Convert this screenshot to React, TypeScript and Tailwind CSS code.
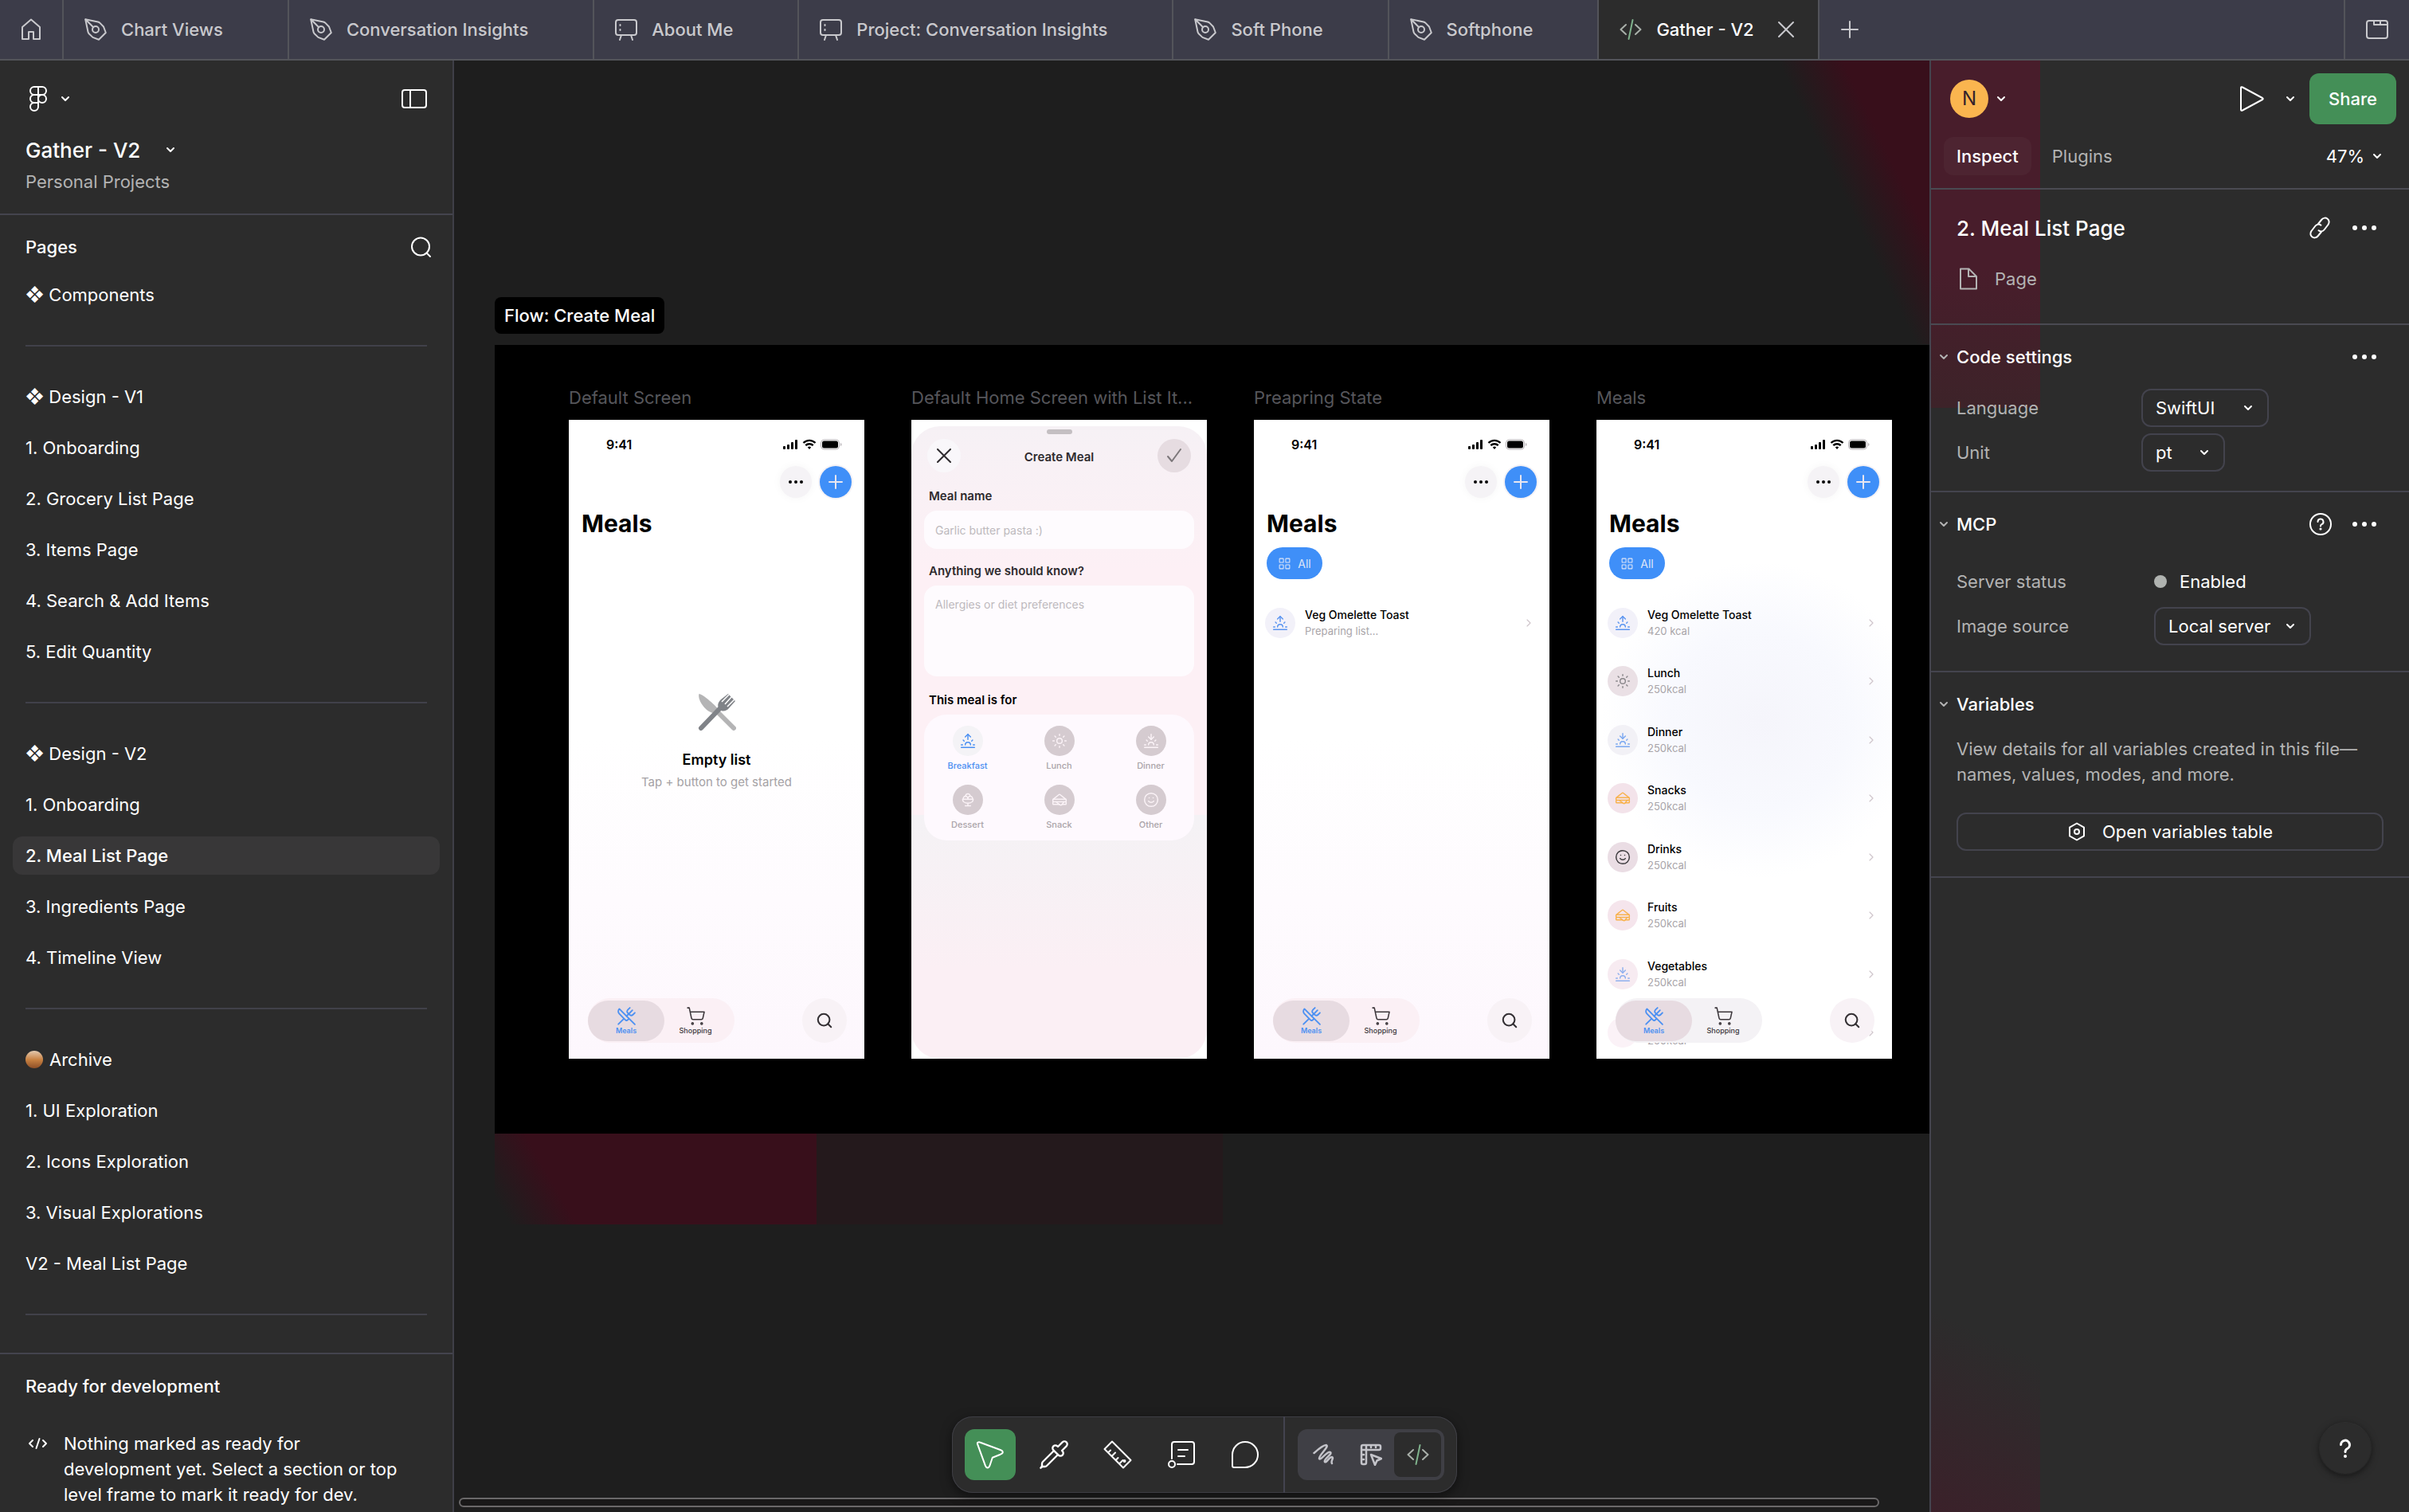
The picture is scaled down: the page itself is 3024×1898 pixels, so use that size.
import { useState, type ReactNode } from 'react';
import clsx from 'clsx';
import {
  ChevronRight,
  IceCreamBowl,
  LayoutGrid,
  Pipette,
  Sandwich,
  Search,
  ShoppingCart,
  Smile,
  Sun,
  Sunrise,
  Sunset,
  UtensilsCrossed,
} from 'lucide-react';

type TabKind = 'design' | 'board' | 'dev';

const TABS: { name: string; kind: TabKind }[] = [
  { name: 'Chart Views', kind: 'design' },
  { name: 'Conversation Insights', kind: 'design' },
  { name: 'About Me', kind: 'board' },
  { name: 'Project: Conversation Insights', kind: 'board' },
  { name: 'Soft Phone', kind: 'design' },
  { name: 'Softphone', kind: 'design' },
  { name: 'Gather - V2', kind: 'dev' },
];

const PAGE_GROUPS = [
  ['❖ Components'],
  ['❖ Design - V1', '1. Onboarding', '2. Grocery List Page', '3. Items Page', '4. Search & Add Items', '5. Edit Quantity'],
  ['❖ Design - V2', '1. Onboarding', '2. Meal List Page', '3. Ingredients Page', '4. Timeline View'],
  ['Archive', '1. UI Exploration', '2. Icons Exploration', '3. Visual Explorations', 'V2 - Meal List Page'],
];

// last row only peeks out from under the tab bar
const MEALS = [
  { name: 'Veg Omelette Toast', sub: '420 kcal', icon: Sunrise, tone: 'bg-[#f2f1f9] text-[#5b95f0]' },
  { name: 'Lunch', sub: '250kcal', icon: Sun, tone: 'bg-[#eae0e5] text-[#8b888c]' },
  { name: 'Dinner', sub: '250kcal', icon: Sunset, tone: 'bg-[#f2f1f6] text-[#7ba8f0]' },
  { name: 'Snacks', sub: '250kcal', icon: Sandwich, tone: 'bg-[#f3e3ea] text-[#f8b24e]' },
  { name: 'Drinks', sub: '250kcal', icon: Smile, tone: 'bg-[#eadde4] text-[#3c3a3d]' },
  { name: 'Fruits', sub: '250kcal', icon: Sandwich, tone: 'bg-[#f5e5ec] text-[#f8b24e]' },
  { name: 'Vegetables', sub: '250kcal', icon: Sunset, tone: 'bg-[#f7ebf1] text-[#8fb0ee]' },
  { name: '', sub: '250kcal', icon: Sunset, tone: 'bg-[#fbf2f7] text-[#fbf2f7]' },
];

const KINDS = [
  { name: 'Breakfast', icon: Sunrise },
  { name: 'Lunch', icon: Sun },
  { name: 'Dinner', icon: Sunset },
  { name: 'Dessert', icon: IceCreamBowl },
  { name: 'Snack', icon: Sandwich },
  { name: 'Other', icon: Smile },
];

/* ---------- icons ---------- */

function Icon({ size = 28, box = 28, sw = 2, className, children }: {
  size?: number; box?: number; sw?: number; className?: string; children: ReactNode;
}) {
  return (
    <svg
      width={size}
      height={size}
      viewBox={`0 0 ${box} ${box}`}
      fill="none"
      stroke="currentColor"
      strokeWidth={sw}
      strokeLinecap="round"
      strokeLinejoin="round"
      aria-hidden="true"
      className={clsx('shrink-0', className)}
    >
      {children}
    </svg>
  );
}

const Chevron = ({ className }: { className?: string }) => (
  <Icon size={12} box={12} className={className}><path d="M2 4l4 4 4-4" /></Icon>
);

const Dots = () => (
  <Icon size={32} box={32}>
    <g fill="currentColor" stroke="none">
      <circle cx="4" cy="16" r="3" /><circle cx="16" cy="16" r="3" /><circle cx="28" cy="16" r="3" />
    </g>
  </Icon>
);

const CodeIcon = ({ size = 28 }: { size?: number }) => (
  <Icon size={size} className="text-[#a9b0aa]">
    <path d="M8 8l-6.500 6L8 20M20 8l6.500 6L20 20" />
    <path d="M16.500 2l-5 24" stroke="#7fb28c" />
  </Icon>
);

function TabIcon({ kind }: { kind: TabKind }) {
  if (kind === 'dev') return <CodeIcon />;
  if (kind === 'board') {
    return (
      <Icon>
        <rect x="1" y="2" width="26" height="19" rx="3" />
        <path d="M8 21l-2 6M20 21l2 6M6.500 8v1M6.500 14v1" />
      </Icon>
    );
  }
  return (
    <Icon>
      <path d="M1.200 1.200L17 4.500c1 .2 1.800.7 2.500 1.400L24 10.500 26.800 18 18 26.800l-7.500-2.900-4.600-4.400c-.7-.7-1.200-1.500-1.400-2.500z" />
      <circle cx="14" cy="14" r="4" />
      <path d="M1.500 1.500l9.700 9.700" />
    </Icon>
  );
}

/* ---------- top bar ---------- */

function TabBar() {
  const [active, setActive] = useState('Gather - V2');
  return (
    <nav className="flex h-19 shrink-0 border-b-2 border-[#53545a] bg-[#3c3c49] text-[22px] font-medium text-[#c9c9cd]">
      <button type="button" aria-label="Home" className="flex w-20 items-center justify-center border-r-2 border-[#53545a]">
        <Icon><path d="M3 11L14 1.500 25 11v15h-8v-9h-6v9H3z" /></Icon>
      </button>
      {TABS.map(t => (
        <button
          key={t.name}
          type="button"
          onClick={() => setActive(t.name)}
          className={clsx(
            'flex items-center gap-4.5 border-r-2 border-[#53545a] pl-6.5 whitespace-nowrap',
            active === t.name ? 'bg-[#2c2c2c] pr-7 text-white' : 'pr-[81px]',
          )}
        >
          <TabIcon kind={t.kind} />
          {t.name}
          {active === t.name && (
            <Icon size={24} box={24} className="ml-2.5 text-[#c9c9cd]"><path d="M3 3l18 18M21 3L3 21" /></Icon>
          )}
        </button>
      ))}
      <button type="button" aria-label="New tab" className="flex w-19 items-center justify-center">
        <Icon size={24} box={24}><path d="M12 2v20M2 12h20" /></Icon>
      </button>
      <button type="button" aria-label="Show all tabs" className="ml-auto flex w-[82px] items-center justify-center border-l-2 border-[#53545a]">
        <Icon>
          <rect x="1" y="3" width="26" height="22" rx="3" />
          <path d="M10 3v5h17M18 3v5" />
        </Icon>
      </button>
    </nav>
  );
}

/* ---------- left sidebar ---------- */

function LeftSidebar() {
  const [page, setPage] = useState('2-2');
  return (
    <aside className="flex w-[570px] shrink-0 flex-col border-r-2 border-[#3f3f48] bg-[#2c2c2c] text-[22px] text-white">
      <header className="border-b-2 border-[#44444e] px-8 pb-6">
        <div className="flex h-24 items-center justify-between">
          <button type="button" aria-label="Main menu" className="flex items-center gap-3">
            <Icon size={32} box={32}>
              <path d="M16 1h-5a5 5 0 0 0 0 10h5zM16 1h5a5 5 0 0 1 0 10h-5zM16 11h-5a5 5 0 0 0 0 10h5z" />
              <path d="M16 21h-5a5 5 0 1 0 5 5z" />
              <circle cx="21" cy="16" r="5" />
            </Icon>
            <Chevron />
          </button>
          <button type="button" aria-label="Toggle sidebar">
            <Icon size={32} box={32}>
              <rect x="1" y="5" width="30" height="22" rx="3" />
              <path d="M11 5v22" />
            </Icon>
          </button>
        </div>
        <button type="button" className="flex h-8 items-center gap-8 text-[26px] font-medium">
          Gather - V2
          <Chevron />
        </button>
        <p className="mt-2 h-8 leading-8 text-[#b3b3b3]">Personal Projects</p>
      </header>

      <div className="flex min-h-0 flex-1 flex-col overflow-hidden px-4">
        <div className="flex h-20 items-center justify-between pr-2.5 pl-4">
          <h2 className="font-medium">Pages</h2>
          <button type="button" aria-label="Search pages">
            <Icon size={28}>
              <circle cx="14" cy="13.500" r="11" />
              <path d="M21.500 21.500l4.500 4.500" />
            </Icon>
          </button>
        </div>
        {PAGE_GROUPS.map((group, g) => (
          <div key={g} className={clsx('flex flex-col', g === 0 && '-mt-3')}>
            {group.map((name, i) => {
              const id = `${g}-${i}`;
              return (
                <div key={id} className="flex h-16 items-center">
                  <button
                    type="button"
                    onClick={() => setPage(id)}
                    className={clsx(
                      'flex h-12 w-full items-center rounded-xl px-4 text-left whitespace-pre',
                      page === id && 'bg-[#383738] font-medium',
                    )}
                  >
                    {name === 'Archive' && (
                      <span className="mr-2 size-5.5 rounded-full bg-linear-to-b from-[#e2c9ae] via-[#c98343] to-[#8e4f27]" />
                    )}
                    {name}
                  </button>
                </div>
              );
            })}
            <div className="flex h-16 items-center px-4"><hr className="w-full border-t-2 border-[#41414a]" /></div>
          </div>
        ))}
      </div>

      <section className="h-[200px] shrink-0 border-t-2 border-[#44444e] px-8 pt-6">
        <h2 className="h-8 leading-8 font-medium">Ready for development</h2>
        <div className="mt-10 flex gap-5">
          <Icon size={28} className="mt-0.5 text-white">
            <path d="M9 10l-4 4 4 4M22 10l4 4-4 4M17.500 8l-4 12" />
          </Icon>
          <p className="leading-8">
            Nothing marked as ready for<br />development yet. Select a section or top<br />level frame to mark it ready for dev.
          </p>
        </div>
      </section>
    </aside>
  );
}

/* ---------- phone frames ---------- */

function StatusBar() {
  return (
    <div className="flex h-[62px] items-center justify-between pr-7 pl-[47px] text-[16px] font-semibold">
      9:41
      <svg width="74" height="14" viewBox="0 0 74 14" aria-hidden="true">
        <rect x="0" y="9" width="3" height="4" rx="1" />
        <rect x="5" y="7" width="3" height="6" rx="1" />
        <rect x="10" y="4" width="3" height="9" rx="1" />
        <rect x="15" y="1" width="3" height="12" rx="1" />
        <g fill="none" stroke="#000" strokeWidth="2.400">
          <path d="M25.500 5a10.500 10.500 0 0 1 15 0M28.300 8.200a6.500 6.500 0 0 1 9.400 0" />
        </g>
        <path d="M30.800 10.600a3.200 3.200 0 0 1 4.400 0L33 13z" />
        <rect x="47.500" y="1" width="23" height="12" rx="4" fill="none" stroke="#b5b0b4" />
        <rect x="49" y="2.500" width="20" height="9" rx="2.500" />
        <path d="M72 5v4q1.500-.5 1.500-2T72 5z" fill="#b5b0b4" />
      </svg>
    </div>
  );
}

function MealsHeader({ filter }: { filter?: boolean }) {
  return (
    <>
      <StatusBar />
      <div className="-mt-1 flex justify-end gap-2.5 pr-4">
        <button type="button" aria-label="More" className="flex size-10 items-center justify-center rounded-full bg-[#f5f3f6] shadow-[0_0_12px_rgba(0,0,0,0.04)]">
          <svg width="20" height="6" viewBox="0 0 20 6" aria-hidden="true">
            <circle cx="3" cy="3" r="2" /><circle cx="10" cy="3" r="2" /><circle cx="17" cy="3" r="2" />
          </svg>
        </button>
        <button type="button" aria-label="Add meal" className="flex size-10 items-center justify-center rounded-full bg-[#3f8ff8] text-[#e8e6f0] ring-2 ring-[#f4f2f6]">
          <Icon size={18} box={18}><path d="M9 1v16M1 9h16" /></Icon>
        </button>
      </div>
      <h3 className="mt-3 px-4 text-[30px] leading-10 font-bold">Meals</h3>
      {filter && (
        <button type="button" className="mt-2.5 ml-4 flex h-10 w-[70px] items-center justify-center gap-2 rounded-full bg-[#3f8ff8] text-[14px] text-[#dfe6f7]">
          <LayoutGrid size={17} strokeWidth={1.5} />
          All
        </button>
      )}
    </>
  );
}

function MealRow({ name, sub, icon: RowIcon, tone }: (typeof MEALS)[number]) {
  return (
    <li className="flex items-center pr-4.5 pl-3.5">
      <span className={clsx('flex size-[38px] items-center justify-center rounded-full', tone)}>
        <RowIcon size={20} strokeWidth={1.75} />
      </span>
      <span className="ml-3 flex-1">
        <span className="block min-h-5 text-[14px] leading-5 font-medium">{name}</span>
        <span className="block text-[13px] leading-5 text-[#a9a5a9]">{sub}</span>
      </span>
      <ChevronRight size={16} strokeWidth={1.75} className="text-[#cfc5cb]" />
    </li>
  );
}

function PhoneTabs({ gray }: { gray?: boolean }) {
  return (
    <div className="absolute inset-x-0 bottom-5 flex justify-between pr-5.5 pl-6">
      <div className={clsx('flex h-14 items-center rounded-full', gray ? 'bg-[#f4f2f5]' : 'bg-[#fbf0f5]')}>
        <button type="button" className="flex h-[51px] w-24 flex-col items-center justify-center rounded-full bg-[#e7dbe1] text-[#4b90f2]">
          <UtensilsCrossed size={25} strokeWidth={1.75} />
          <span className="text-[9px] leading-3 font-semibold">Meals</span>
        </button>
        <button type="button" className="flex w-[88px] flex-col items-center pr-2.5 text-[#3c373b]">
          <ShoppingCart size={25} strokeWidth={1.5} />
          <span className="text-[9px] leading-3 font-medium">Shopping</span>
        </button>
      </div>
      <button type="button" aria-label="Search" className="flex size-14 items-center justify-center rounded-full bg-[#f8f2f6] text-[#343034]">
        <Search size={22} strokeWidth={2.25} />
      </button>
    </div>
  );
}

function Frame({ title, className, children }: { title: string; className?: string; children: ReactNode }) {
  return (
    <article className="w-[371px] shrink-0">
      <h3 className="mb-3 h-8 text-[22px] leading-8 whitespace-nowrap text-[#56565b]">{title}</h3>
      <div className={clsx('relative h-[802px] overflow-hidden text-black', className)}>{children}</div>
    </article>
  );
}

function EmptyScreen() {
  return (
    <Frame title="Default Screen" className="bg-linear-to-b from-white from-50% to-[#fdf7fd]">
      <MealsHeader />
      <div className="mt-[193px] flex flex-col items-center">
        <svg width="48" height="48" viewBox="0 0 48 48" aria-hidden="true">
          <path d="M1.500 1C6 1 24 17 25 20l-5 5C12 25-1 10 1.500 1z" fill="#b4b4b5" />
          <path d="M24 23l21 21" stroke="#b4b4b5" strokeWidth="6" strokeLinecap="round" />
          <path d="M4 44l24-25" stroke="#808388" strokeWidth="6" strokeLinecap="round" />
          <path d="M38 1l-9 7c-4 4-5 8-2 12s9 3 12-1l8-9" fill="#808388" />
          <path d="M39 2L30 11M43 4l-9 10M46 8l-9 9" stroke="#fff" strokeWidth="1.500" />
        </svg>
        <h4 className="mt-5 text-[18px] leading-8 font-semibold">Empty list</h4>
        <p className="text-[15px] leading-6 text-[#a5a2a5]">Tap + button to get started</p>
      </div>
      <PhoneTabs />
    </Frame>
  );
}

function CreateMealScreen() {
  const [kind, setKind] = useState('Breakfast');
  return (
    <Frame title="Default Home Screen with List It..." className="bg-white pt-2">
      <form
        className="h-full rounded-[36px] bg-[linear-gradient(to_bottom,#f6f1f5,#fdf0f5_180px,#fdf0f5_488px,#f4f2f5_488px,#fbeff4_680px)] px-4"
        onSubmit={e => e.preventDefault()}
      >
        <div className="flex justify-center pt-1"><span className="h-1.5 w-8 rounded-full bg-[#c4bfc2]" /></div>
        <div className="-mx-1 mt-1.5 flex items-center justify-between px-2">
          <button type="button" aria-label="Close" className="flex size-[42px] items-center justify-center rounded-full bg-[#f9f7fa]">
            <Icon size={18} box={18} className="text-[#2e2b2e]"><path d="M1 1l16 16M17 1L1 17" /></Icon>
          </button>
          <h4 className="pt-1 text-[15px] font-semibold text-[#2e2b2e]">Create Meal</h4>
          <button type="submit" aria-label="Save" className="flex size-[42px] items-center justify-center rounded-full bg-[#e6dce1]">
            <Icon size={20} box={20} className="text-[#7c777a]"><path d="M2 11l5 6L18 2" /></Icon>
          </button>
        </div>
        <label htmlFor="meal-name" className="mt-4.5 ml-1.5 block text-[15px] leading-6 font-semibold text-[#2e2b2e]">Meal name</label>
        <input
          id="meal-name"
          placeholder="Garlic butter pasta :)"
          className="mt-1.5 block h-12 w-full rounded-2xl bg-[#fefbfe] px-3.5 text-[14px] placeholder-[#bdb9bd] outline-none"
        />
        <label htmlFor="meal-notes" className="mt-4 ml-1.5 block text-[15px] leading-6 font-semibold text-[#2e2b2e]">Anything we should know?</label>
        <textarea
          id="meal-notes"
          placeholder="Allergies or diet preferences"
          className="mt-1.5 block h-[114px] w-full resize-none rounded-2xl bg-[#fefbfe] px-3.5 py-3 text-[14px] leading-6 placeholder-[#bdb9bd] outline-none"
        />
        <h5 className="mt-4.5 ml-1.5 text-[15px] leading-6 font-semibold">This meal is for</h5>
        <div className="mt-1.5 grid h-[158px] auto-rows-[74px] grid-cols-[repeat(3,115px)] content-start justify-center rounded-[28px] bg-[#fef9fe] pt-3.5">
          {KINDS.map(({ name, icon: KindIcon }) => (
            <button
              key={name}
              type="button"
              onClick={() => setKind(name)}
              className={clsx('flex flex-col items-center gap-1 text-[11px] leading-4 font-medium', kind === name ? 'text-[#4b90f2]' : 'text-[#aaa4a8]')}
            >
              <span className={clsx('flex size-[38px] items-center justify-center rounded-full', kind === name ? 'bg-[#f4f3f6]' : 'bg-[#d5cbd0] text-[#fbf3f7]')}>
                <KindIcon size={20} strokeWidth={1.75} />
              </span>
              {name}
            </button>
          ))}
        </div>
      </form>
    </Frame>
  );
}

function PreparingScreen() {
  return (
    <Frame title="Preapring State" className="bg-linear-to-b from-white from-50% to-[#fdf7fd]">
      <MealsHeader filter />
      <ul className="mt-4.5 grid h-[74px]">
        <MealRow {...MEALS[0]} sub="Preparing list..." />
      </ul>
      <PhoneTabs />
    </Frame>
  );
}

function MealsScreen() {
  return (
    <Frame title="Meals" className="bg-[radial-gradient(circle_at_55%_47%,#f5f5fb,#f8f9fe_24%,#fff_42%)]">
      <MealsHeader filter />
      <ul className="mt-4.5 grid h-[588px] grid-rows-8">
        {MEALS.map(m => <MealRow key={m.name} {...m} />)}
      </ul>
      <PhoneTabs gray />
    </Frame>
  );
}

/* ---------- canvas ---------- */

function Canvas() {
  return (
    <main className="relative min-w-0 flex-1 overflow-hidden bg-[#1e1e1e] pt-[297px] pl-[51px]">
      <div className="pointer-events-none absolute top-0 right-0 h-[356px] w-[280px] bg-[linear-gradient(64deg,transparent_58%,#380f1b_76%)]" />
      <h2 className="inline-block rounded-lg bg-black px-3 text-[22px] leading-[46px] font-medium text-white">Flow: Create Meal</h2>
      <section className="relative mt-3.5 w-max bg-black pt-[50px] pr-[93px] pb-[94px] pl-[93px]">
        <div className="flex gap-[59px]">
          <EmptyScreen />
          <CreateMealScreen />
          <PreparingScreen />
          <MealsScreen />
        </div>
        <div className="pointer-events-none absolute top-full left-0 flex h-[114px]">
          <div className="w-[404px] bg-[linear-gradient(60deg,transparent_4%,#380f1b_22%)]" />
          <div className="w-[510px] bg-[#24191c]" />
        </div>
      </section>
      <div className="absolute bottom-1.5 left-1.5 h-3 w-[1783px] max-w-[97%] rounded-full border-2 border-[#6a6869] bg-[#191818]" />
    </main>
  );
}

/* ---------- right panel ---------- */

function Select({ id, options, className }: { id: string; options: string[]; className: string }) {
  return (
    <span className={clsx('relative', className)}>
      <select id={id} className="h-12 w-full appearance-none rounded-xl border-2 border-[#43434d] bg-transparent pl-4 text-white outline-none">
        {options.map(o => <option key={o} className="bg-[#2c2c2c]">{o}</option>)}
      </select>
      <Chevron className="pointer-events-none absolute top-[18px] right-5 text-white" />
    </span>
  );
}

function PanelSection({ title, actions, children }: { title: string; actions?: ReactNode; children: ReactNode }) {
  return (
    <section className="border-b-2 border-[#44444e] pr-8 pl-2.5">
      <div className="flex h-20 items-center">
        <button type="button" className="flex items-center gap-2.5 font-medium text-white">
          <Chevron className="text-[#b3b3b3]" />
          {title}
        </button>
        <div className="ml-auto flex items-center gap-6 pr-2 text-white">{actions}</div>
      </div>
      <div className="pl-5.5">{children}</div>
    </section>
  );
}

function RightPanel() {
  return (
    <aside className="relative w-[602px] shrink-0 overflow-hidden border-l-2 border-[#44444e] bg-[#2c2c2c] text-[22px] text-[#b3b3b3]">
      <div className="pointer-events-none absolute top-0 left-0 h-[436px] w-[137px] bg-[linear-gradient(to_bottom,#481d2b_60%,#3d2329)]" />
      <div className="pointer-events-none absolute bottom-0 left-0 h-[300px] w-[137px] bg-[linear-gradient(25deg,#3b212a,transparent_70%)]" />
      <div className="relative">
        <header className="border-b-2 border-[#4a4a52] pb-4">
          <div className="flex h-24 items-center pr-4 pl-6 text-white">
            <button type="button" aria-label="Account" className="flex items-center gap-2.5">
              <span className="flex size-12 items-center justify-center rounded-full bg-[#fab54f] text-[24px] text-[#33222b]">N</span>
              <Chevron />
            </button>
            <button type="button" aria-label="Present" className="mr-6.5 ml-auto">
              <Icon size={34} box={34}><path d="M4 3.500v27q0 2 2 1L31 18q1.500-1 0-2L6 2.500q-2-1-2 1z" /></Icon>
            </button>
            <button type="button" aria-label="Present options"><Chevron /></button>
            <button type="button" className="ml-4.5 h-16 rounded-xl bg-[#448f57] px-6 font-medium">Share</button>
          </div>
          <div className="flex h-12 items-center pr-8.5 pl-4">
            <button type="button" className="h-12 rounded-xl bg-white/3 px-4 font-medium text-white">Inspect</button>
            <button type="button" className="ml-2.5 px-4 font-normal">Plugins</button>
            <button type="button" className="ml-auto flex items-center gap-2.5 text-white">47% <Chevron /></button>
          </div>
        </header>

        <section className="border-b-2 border-[#4a4a52] px-8 pt-6 pb-8">
          <div className="flex h-12 items-center text-white">
            <h2 className="text-[26px] font-medium">2. Meal List Page</h2>
            <button type="button" aria-label="Copy link" className="mr-6.5 ml-auto">
              <Icon size={28}>
                <path d="M12 9l4.500-5.500a5 5 0 0 1 8 6.500l-5 6.500a5 5 0 0 1-7 .8" />
                <path d="M16 19l-4.500 5.500a5 5 0 0 1-8-6.500l5-6.500a5 5 0 0 1 7-.8" />
              </Icon>
            </button>
            <button type="button" aria-label="More options" className="mr-2"><Dots /></button>
          </div>
          <div className="mt-4 flex h-12 items-center gap-5">
            <Icon size={28}>
              <path d="M5 1.500h10.500L25 11v15.500H5zM15 1.500V11h10" />
            </Icon>
            Page
          </div>
        </section>

        <PanelSection title="Code settings" actions={<button type="button" aria-label="Code settings options"><Dots /></button>}>
          <div className="flex flex-col gap-2 pb-6">
            <div className="flex h-12 items-center">
              <label htmlFor="language" className="w-[232px]">Language</label>
              <Select id="language" options={['SwiftUI', 'UIKit', 'CSS', 'Compose']} className="w-40" />
            </div>
            <div className="flex h-12 items-center">
              <label htmlFor="unit" className="w-[232px]">Unit</label>
              <Select id="unit" options={['pt', 'px']} className="w-[105px]" />
            </div>
          </div>
        </PanelSection>

        <PanelSection
          title="MCP"
          actions={
            <>
              <button type="button" aria-label="About MCP">
                <Icon size={30} box={30}>
                  <circle cx="15" cy="15" r="13" />
                  <path d="M11.500 12a3.500 3.500 0 1 1 5 3.200q-1.500.8-1.500 2.300" />
                  <circle cx="15" cy="21" r=".6" fill="currentColor" />
                </Icon>
              </button>
              <button type="button" aria-label="MCP options"><Dots /></button>
            </>
          }
        >
          <div className="flex flex-col gap-2 pt-2 pb-8">
            <div className="flex h-12 items-center">
              <span className="w-62">Server status</span>
              <span className="mr-4 size-4 rounded-full bg-[#b0b3b0]" />
              <span className="text-white">Enabled</span>
            </div>
            <div className="flex h-12 items-center">
              <label htmlFor="image-source" className="w-62">Image source</label>
              <Select id="image-source" options={['Local server', 'Download']} className="w-[197px]" />
            </div>
          </div>
        </PanelSection>

        <PanelSection title="Variables">
          <p className="leading-8">View details for all variables created in this file—<br />names, values, modes, and more.</p>
          <button type="button" className="mt-8 mb-8 flex h-12 w-full items-center justify-center gap-5 rounded-xl border-2 border-[#43434d] text-white">
            <Icon size={24} box={24}>
              <path d="M12 1.500l9 5.200v10.600l-9 5.200-9-5.200V6.700z" />
              <circle cx="12" cy="12" r="3" />
            </Icon>
            Open variables table
          </button>
        </PanelSection>
      </div>

      <button
        type="button"
        aria-label="Help"
        className="absolute right-12 bottom-12 flex size-16 items-center justify-center rounded-full bg-[#2c2c2c] text-white shadow-[0_2px_10px_rgba(0,0,0,0.6),0_0_0_1px_#3a3a3a]"
      >
        <Icon size={28}>
          <path d="M8.500 9.500a5.500 5.500 0 1 1 8 5q-2.500 1.300-2.500 4" strokeWidth="3" />
          <circle cx="14" cy="24" r="1" fill="currentColor" />
        </Icon>
      </button>
    </aside>
  );
}

/* ---------- toolbar ---------- */

function ToolButton({ label, active, children }: { label: string; active?: boolean; children: ReactNode }) {
  return (
    <button
      type="button"
      aria-label={label}
      className={clsx('flex size-16 items-center justify-center rounded-xl', active && 'bg-[#448f57]')}
    >
      {children}
    </button>
  );
}

function Toolbar() {
  return (
    <div className="pointer-events-none absolute inset-x-0 bottom-6 flex justify-center">
      <div className="pointer-events-auto flex h-24 items-center gap-4 rounded-[26px] bg-[#2c2c2c] px-4 text-white shadow-[0_4px_14px_rgba(0,0,0,0.5)] ring-1 ring-[#3e3e44] ring-inset">
        <ToolButton label="Move" active>
          <Icon size={36} box={36}><path d="M3 2.500q-1.500.5-1 2.200l10 27.500q1 2.500 3 2.300 1.500-.3 2.300-2.300l3.500-10.500 10-4q3-1.300 3-3 0-1.500-2.500-2.500L5 2.500q-1.200-.5-2 0z" /></Icon>
        </ToolButton>
        <ToolButton label="Color picker"><Pipette size={40} strokeWidth={1.4} /></ToolButton>
        <ToolButton label="Measure">
          <Icon size={36} box={36}>
            <path d="M11 1.500L34.500 25 25 34.500 1.500 11zM6 15.500l3-3M10.500 20l4.500-4.500M15.500 25l3-3M20 29.500l4.500-4.500" />
            <circle cx="26.500" cy="26" r="1" fill="currentColor" />
          </Icon>
        </ToolButton>
        <ToolButton label="Annotate">
          <Icon size={36} box={36}>
            <path d="M6 23V5q0-3 3-3h22q3 0 3 3v22q0 3-3 3H13M14 12h12M14 20h8" />
            <circle cx="6" cy="30" r="4" />
          </Icon>
        </ToolButton>
        <ToolButton label="Comment">
          <Icon size={36} box={36}><path d="M2 18a16 16 0 1 1 16 16H4q-2 0-2-2z" /></Icon>
        </ToolButton>
        <span className="h-full w-0.5 bg-[#43434f]" />
        <div className="flex h-16 w-46 items-center rounded-xl bg-[#3f3f45] p-1 text-[#c4c4ca]">
          <button type="button" aria-label="Draw" className="flex h-full flex-1 items-center justify-center">
            <Icon size={28} sw={2.5}>
              <path d="M1.500 12C7 7 13 1.500 17 2c4 2-10 13-9 17 2 3 10-10 14-8 3 3-9 8-7 12 2 2 5-6 9-6 3 1-2 5 0 8" />
            </Icon>
          </button>
          <button type="button" aria-label="Design" className="flex h-full flex-1 items-center justify-center">
            <Icon size={28} sw={2.5}>
              <path d="M8 8h16q2 0 2-2V4q0-2-2-2H4Q2 2 2 4v20q0 2 2 2h2q2 0 2-2zM8 2v6M2 8h6M14 3v2M20 3v2M3 14h2M3 20h2" />
              <path d="M14 14l13 5-5.500 2.500L19 27z" />
            </Icon>
          </button>
          <button type="button" aria-label="Dev Mode" className="flex h-full flex-1 items-center justify-center rounded-lg bg-[#2c2c2c]">
            <CodeIcon />
          </button>
        </div>
      </div>
    </div>
  );
}

export default function App() {
  return (
    <div className="relative flex h-screen flex-col overflow-hidden bg-[#1e1e1e] font-['Inter',sans-serif]">
      <TabBar />
      <div className="flex min-h-0 flex-1">
        <LeftSidebar />
        <Canvas />
        <RightPanel />
      </div>
      <Toolbar />
    </div>
  );
}
